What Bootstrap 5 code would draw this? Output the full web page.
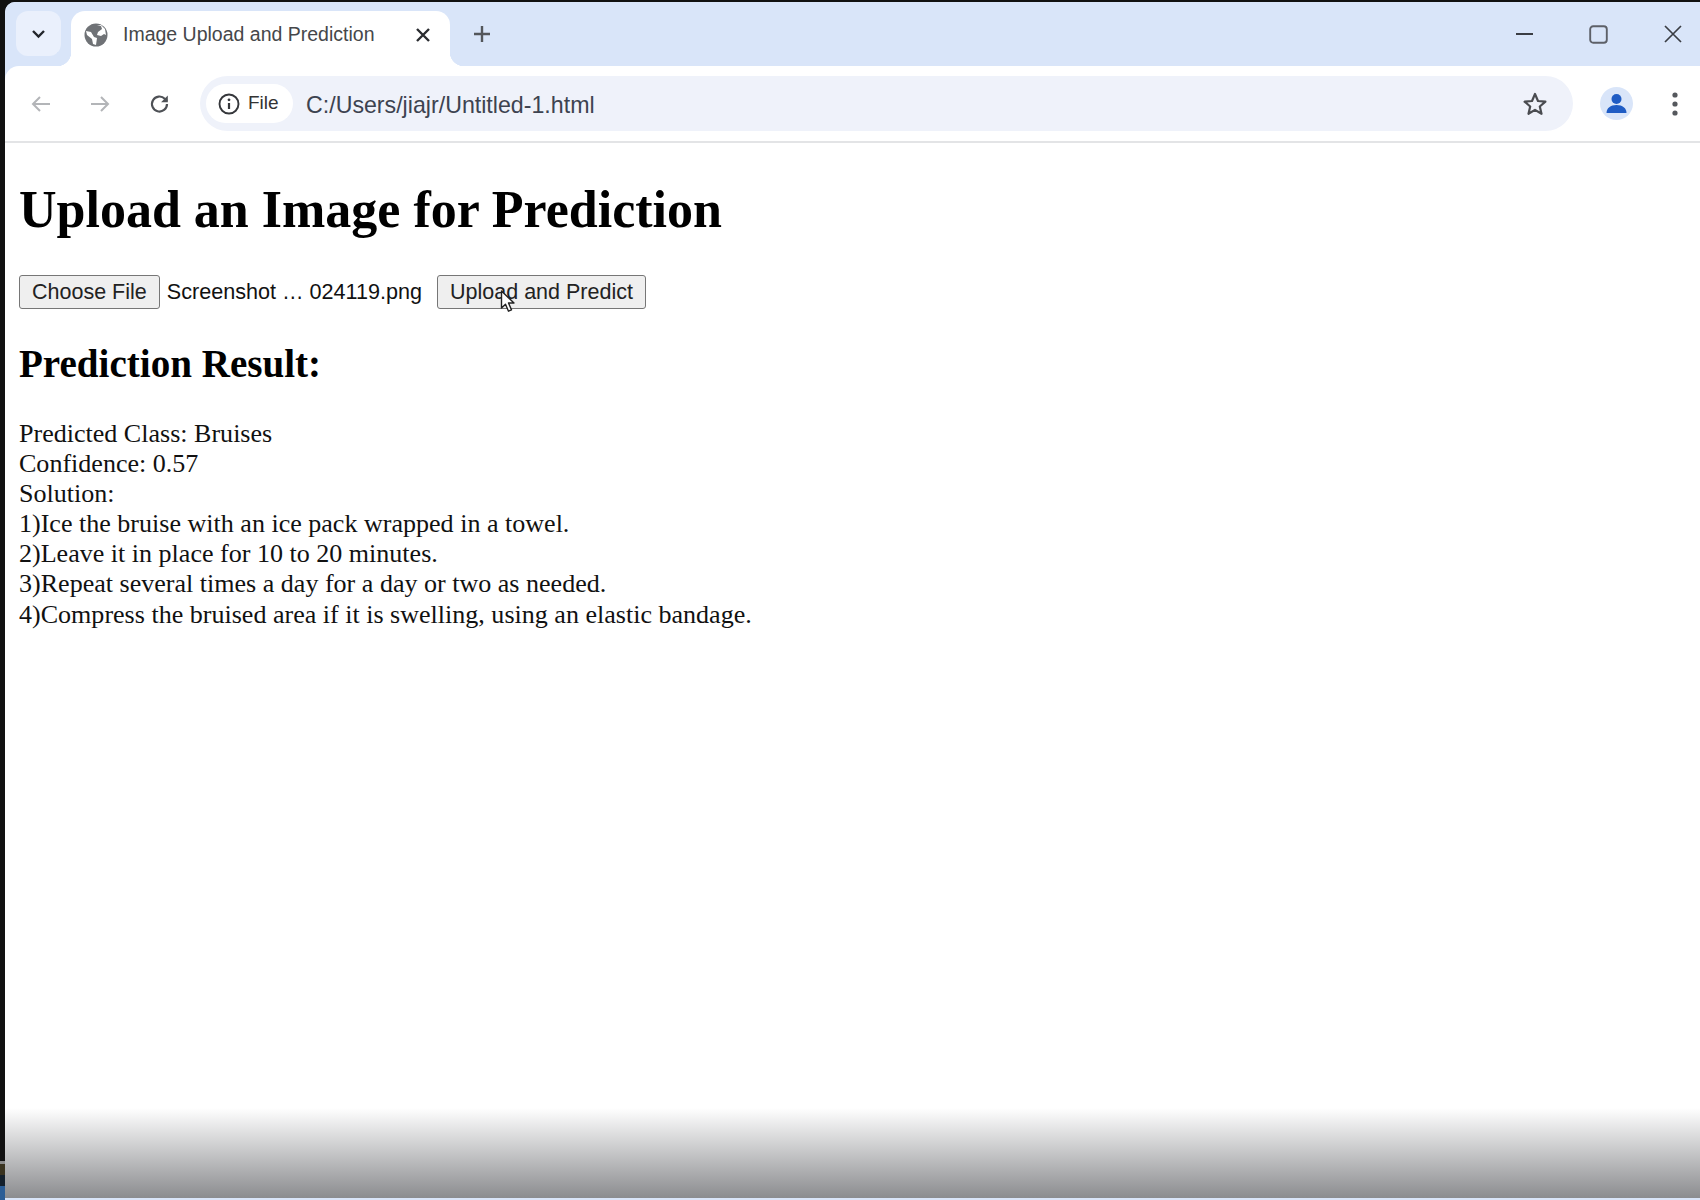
<!DOCTYPE html>
<html lang="en">
<head>
    <meta charset="UTF-8">
    <meta name="viewport" content="width=device-width, initial-scale=1.0">
    <title>Image Upload and Prediction</title>
    <link href="https://cdn.jsdelivr.net/npm/bootstrap@5.3.3/dist/css/bootstrap.min.css" rel="stylesheet">
    <style>
        html, body { height: 100%; overflow: hidden; }
        body { background: linear-gradient(to bottom, #111 1161px, #8a8a8a 1161px, #8a8a8a 1164px, #3a3320 1164px, #3a3320 1175px, #14202c 1175px, #14202c 1186px, #2b5d96 1186px); padding: 2px 0 0 5px; font-family: "Liberation Sans", sans-serif; }
        .browser-win { height: 1198px; background: #d9e5f9; border-top-left-radius: 10px; overflow: hidden; }
        .tab-strip { height: 64px; background: #d9e5f9; padding: 0 0 0 11px; }
        .tab-menu { width: 45px; height: 45px; margin-top: 9px; border-radius: 12px; background: #eaf0fc; }
        .tab-active { position: relative; width: 379px; height: 55px; margin-left: 10px; margin-top: 9px; padding: 0 19px 8px 13px; background: #fff; border-radius: 14px 14px 0 0; font-size: 19.5px; color: #45474a; }
        .tab-active::before, .tab-active::after { content: ""; position: absolute; bottom: 0; width: 14px; height: 14px; }
        .tab-active::before { left: -14px; background: radial-gradient(circle at 0 0, #d9e5f9 14px, #fff 14.5px); }
        .tab-active::after { right: -14px; background: radial-gradient(circle at 100% 0, #d9e5f9 14px, #fff 14.5px); }
        .tab-active .tab-title { margin-left: 15px; }
        .tab-close { margin-left: auto; }
        .tab-plus { margin-left: 23px; }
        .win-btns { margin-left: auto; padding-right: 17px; gap: 55px; }
        .tool-bar { height: 77px; padding: 0 16px 0 26px; background: #fff; border-top-left-radius: 14px; border-bottom: 2px solid #e3e4e6; }
        .nav-btns { gap: 39px; }
        .addr-box { width: 1373px; height: 55px; margin-left: 29px; padding: 0 25px 0 6px; background: #eff2fa; border-radius: 28px; }
        .file-chip { width: 87px; height: 39px; padding-left: 12px; gap: 8px; border-radius: 20px; background: #fff; font-size: 19px; color: #333; }
        .addr-text { margin-left: 13px; padding-top: 4px; font-size: 23.2px; color: #3d4350; }
        .star-icon { margin-left: auto; }
        .acct-icon { margin-left: 27px; }
        .more-icon { margin-left: 38px; }
        .win-main { height: 1055px; background: #fff; }
        .page-body { padding: 37px 0 0 14px; font-family: "Liberation Serif", serif; color: #000; }
        .page-body h1 { font-size: 52px; font-weight: 700; line-height: 60px; margin: 0; font-family: inherit; }
        .upload-row { margin-top: 35px; height: 34px; font-family: "Liberation Sans", sans-serif; color: #111; }
        .fake-btn { position: relative; height: 34px; padding: 0 12px; border: 1px solid #767676; border-radius: 3px; background: #efefef; color: #222; font-size: 21.5px; line-height: 32px; }
        .file-name { margin-left: 7px; margin-right: 15px; font-size: 21.6px; }
        .cursor-icon { position: absolute; left: 62px; top: 14px; }
        .page-body h2 { font-size: 39.1px; font-weight: 700; line-height: 44px; margin: 33px 0 0 0; font-family: inherit; }
        .result-text { margin-top: 33px; font-size: 26.05px; line-height: 30.1px; color: #111; }
        .fade-bottom { height: 90px; background: linear-gradient(to bottom, #fff, #8b8c8f); }
    </style>
</head>
<body>
    <div class="browser-win d-flex flex-column">
        <div class="tab-strip d-flex align-items-start">
            <div class="tab-menu d-flex align-items-center justify-content-center">
                <svg width="15" height="10" viewBox="0 0 15 10"><path d="M2 2l5.5 5.5L13 2" fill="none" stroke="#22252b" stroke-width="2.4"/></svg>
            </div>
            <div class="tab-active d-flex align-items-center">
                <svg width="24" height="24" viewBox="0 0 24 24"><circle cx="12" cy="12" r="11.5" fill="#6f7276"/><path d="M2 8l5 1 3 5 3 1-1 7-3-1-1-5-5-4zM13 2l4 1 1 3-4 3-1 3 4 1 3-2 2 1-1-6-4-4z" fill="#fff"/></svg>
                <span class="tab-title">Image Upload and Prediction</span>
                <svg class="tab-close" width="16" height="16" viewBox="0 0 16 16"><path d="M2 2l12 12M14 2L2 14" stroke="#2a2c30" stroke-width="2.4"/></svg>
            </div>
            <svg class="tab-plus align-self-center" width="18" height="18" viewBox="0 0 18 18"><path d="M9 1v16M1 9h16" stroke="#53565b" stroke-width="2.4"/></svg>
            <div class="win-btns d-flex align-items-center align-self-center">
                <svg width="18" height="4" viewBox="0 0 18 4"><path d="M0 2h17" stroke="#3a3d44" stroke-width="1.8"/></svg>
                <svg width="19" height="19" viewBox="0 0 19 19"><rect x="1.2" y="1.2" width="16.6" height="16.6" rx="3" fill="none" stroke="#5d6068" stroke-width="1.9"/></svg>
                <svg width="20" height="20" viewBox="0 0 20 20"><path d="M2 2l16 16M18 2L2 18" stroke="#3a3d44" stroke-width="1.7"/></svg>
            </div>
        </div>
        <div class="tool-bar d-flex align-items-center">
            <div class="nav-btns d-flex align-items-center">
                <svg width="20" height="18" viewBox="0 0 20 18"><path d="M19 9H2M9 2L2 9l7 7" fill="none" stroke="#b3b5b8" stroke-width="2"/></svg>
                <svg width="20" height="18" viewBox="0 0 20 18"><path d="M1 9h17M11 2l7 7-7 7" fill="none" stroke="#b3b5b8" stroke-width="2"/></svg>
                <svg width="22" height="22" viewBox="0 0 22 22"><path d="M18 11a7.5 7.5 0 1 1-2.2-5.3L18 8" fill="none" stroke="#4e5156" stroke-width="2.2"/><path d="M18.8 2.5v6.7h-6.7z" fill="#4e5156"/></svg>
            </div>
            <div class="addr-box d-flex align-items-center">
                <div class="file-chip d-flex align-items-center">
                    <svg width="22" height="22" viewBox="0 0 22 22"><circle cx="11" cy="11" r="9.5" fill="none" stroke="#35373b" stroke-width="1.9"/><path d="M11 10v6" stroke="#35373b" stroke-width="2.2"/><circle cx="11" cy="6.8" r="1.4" fill="#35373b"/></svg>
                    <span>File</span>
                </div>
                <span class="addr-text">C:/Users/jiajr/Untitled-1.html</span>
                <svg class="star-icon" width="26" height="26" viewBox="0 0 26 26"><path d="M13 3l3 7 7.4.6-5.6 4.9 1.7 7.3L13 18.9l-6.5 3.9 1.7-7.3-5.6-4.9L10 10z" fill="none" stroke="#4a4c50" stroke-width="2.2" stroke-linejoin="round"/></svg>
            </div>
            <svg class="acct-icon" width="33" height="33" viewBox="0 0 33 33"><circle cx="16.5" cy="16.5" r="16.5" fill="#d9e5f9"/><circle cx="16.5" cy="12" r="5" fill="#1f5cc4"/><path d="M6.5 26c0-5 4-8 10-8s10 3 10 8z" fill="#1f5cc4"/></svg>
            <svg class="more-icon" width="8" height="26" viewBox="0 0 8 26"><circle cx="4" cy="4" r="2.6" fill="#55585d"/><circle cx="4" cy="13" r="2.6" fill="#55585d"/><circle cx="4" cy="22" r="2.6" fill="#55585d"/></svg>
        </div>
        <div class="win-main d-flex flex-column">
            <main class="page-body flex-grow-1">
                <h1>Upload an Image for Prediction</h1>
                <div class="upload-row d-flex align-items-center">
                    <div class="fake-btn">Choose File</div>
                    <span class="file-name">Screenshot … 024119.png</span>
                    <div class="fake-btn">Upload and Predict
                        <svg class="cursor-icon" width="16" height="24" viewBox="0 0 16 24"><path d="M1.5 1v17l4-3.8 3 7 3-1.3-3-6.9h5.5z" fill="#fff" stroke="#222" stroke-width="1.4" stroke-linejoin="round"/></svg>
                    </div>
                </div>
                <h2>Prediction Result:</h2>
                <div class="result-text">
                    Predicted Class: Bruises<br>
                    Confidence: 0.57<br>
                    Solution:<br>
                    1)Ice the bruise with an ice pack wrapped in a towel.<br>
                    2)Leave it in place for 10 to 20 minutes.<br>
                    3)Repeat several times a day for a day or two as needed.<br>
                    4)Compress the bruised area if it is swelling, using an elastic bandage.
                </div>
            </main>
            <div class="fade-bottom"></div>
        </div>
    </div>
    <script src="https://cdn.jsdelivr.net/npm/bootstrap@5.3.3/dist/js/bootstrap.bundle.min.js"></script>
</body>
</html>
